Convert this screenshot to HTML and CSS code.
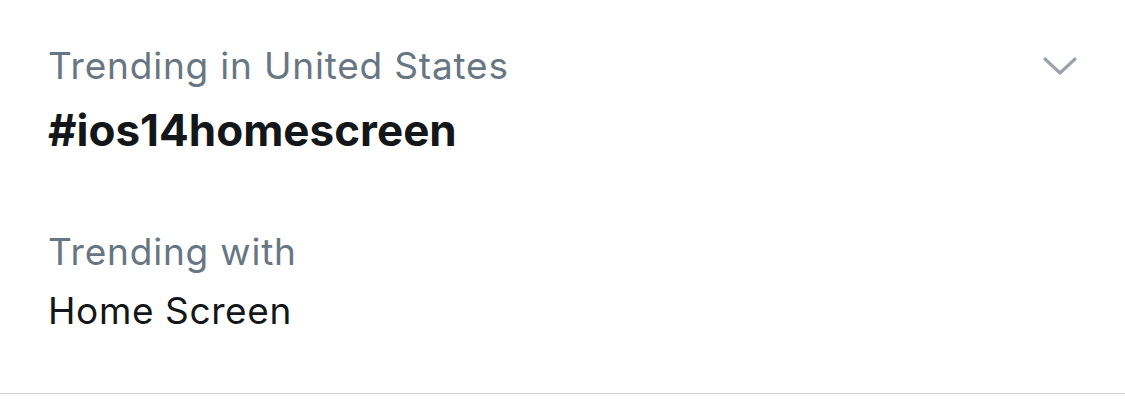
FILE: index.html
```html
<!DOCTYPE html>
<html lang="en">
<head>
    <meta charset="UTF-8">
    <meta name="viewport" content="width=device-width, initial-scale=1.0">
    <title>Trend</title>
    <link rel="stylesheet" href="styles.css">
</head>
<body>
    <div class="trend">
        <div class="trend-head">
            <div class="trend-main">
                <div class="trend-label">Trending in United States</div>
                <div class="trend-name">#ios14homescreen</div>
            </div>
            <svg class="chevron" width="34" height="20" viewBox="0 0 34 20">
                <polyline points="2,3 17,17 32,3" fill="none" stroke="#9aa3ad" stroke-width="3.2" stroke-linecap="round" stroke-linejoin="round"/>
            </svg>
        </div>
        <div class="trend-with">
            <div class="trend-label">Trending with</div>
            <div class="trend-topic">Home Screen</div>
        </div>
    </div>
</body>
</html>
```

FILE: styles.css
```css
body {
    margin: 0;
    padding: 0;
    background: #ffffff;
    font-family: Inter, "Noto Sans", sans-serif;
}
.trend {
    padding: 36px 48px 0 48px;
    height: 357px;
    border-bottom: 1px solid #cfd0d2;
}
.trend-head {
    display: flex;
    justify-content: space-between;
    align-items: flex-start;
}
.trend-label {
    color: #687684;
    font-size: 37px;
    line-height: 60px;
    letter-spacing: 0.8px;
}
.trend-name {
    color: #14171a;
    font-size: 44px;
    font-weight: 700;
    line-height: 68px;
}
.chevron {
    margin-top: 20px;
}
.trend-with {
    margin-top: 58px;
}
.trend-topic {
    color: #14171a;
    font-size: 37px;
    line-height: 58px;
    letter-spacing: 0.6px;
}
```
